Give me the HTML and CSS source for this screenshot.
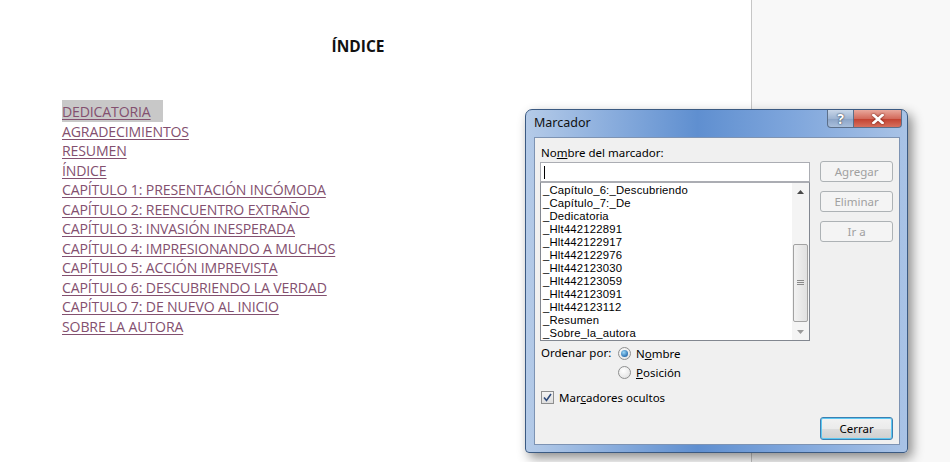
FILE: index.html
```html
<!DOCTYPE html>
<html lang="es">
<head>
    <meta charset="UTF-8">
    <title>Índice - Marcador</title>
    <link rel="stylesheet" href="styles.css">
</head>
<body>
    <div class="workspace">
        <!-- Hoja del documento -->
        <div class="page">
            <h1 class="doc-title">ÍNDICE</h1>
            <ul class="toc">
                <li><a href="#" class="sel">DEDICATORIA</a></li>
                <li><a href="#">AGRADECIMIENTOS</a></li>
                <li><a href="#">RESUMEN</a></li>
                <li><a href="#">ÍNDICE</a></li>
                <li><a href="#">CAPÍTULO 1: PRESENTACIÓN INCÓMODA</a></li>
                <li><a href="#">CAPÍTULO 2: REENCUENTRO EXTRAÑO</a></li>
                <li><a href="#">CAPÍTULO 3: INVASIÓN INESPERADA</a></li>
                <li><a href="#">CAPÍTULO 4: IMPRESIONANDO A MUCHOS</a></li>
                <li><a href="#">CAPÍTULO 5: ACCIÓN IMPREVISTA</a></li>
                <li><a href="#">CAPÍTULO 6: DESCUBRIENDO LA VERDAD</a></li>
                <li><a href="#">CAPÍTULO 7: DE NUEVO AL INICIO</a></li>
                <li><a href="#">SOBRE LA AUTORA</a></li>
            </ul>
        </div>
        <div class="side"></div>
    </div>

    <!-- Ventana Marcador -->
    <div class="dialog">
        <div class="titlebar">
            <span class="title">Marcador</span>
            <div class="caption-btns">
                <span class="cap-btn help">?</span>
                <span class="cap-btn close">
                    <svg width="12" height="10" viewBox="0 0 12 10">
                        <path d="M1.5 1 L10.5 9 M10.5 1 L1.5 9" stroke="#fff" stroke-width="2.6" stroke-linecap="square"/>
                    </svg>
                </span>
            </div>
        </div>
        <div class="client">
            <div class="left-col">
                <div class="label">No<u>m</u>bre del marcador:</div>
                <div class="input"><span class="caret"></span></div>
                <div class="listbox">
                    <ul class="items">
                        <li>_Capítulo_6:_Descubriendo</li>
                        <li>_Capítulo_7:_De</li>
                        <li>_Dedicatoria</li>
                        <li>_Hlt442122891</li>
                        <li>_Hlt442122917</li>
                        <li>_Hlt442122976</li>
                        <li>_Hlt442123030</li>
                        <li>_Hlt442123059</li>
                        <li>_Hlt442123091</li>
                        <li>_Hlt442123112</li>
                        <li>_Resumen</li>
                        <li>_Sobre_la_autora</li>
                    </ul>
                    <div class="scrollbar">
                        <span class="arrow">
                            <svg width="7" height="4" viewBox="0 0 7 4"><path d="M0 4 L3.5 0 L7 4 Z" fill="#4a4a4a"/></svg>
                        </span>
                        <div class="track">
                            <div class="thumb">
                                <svg width="7" height="6" viewBox="0 0 7 6"><path d="M0 0.5 H7 M0 2.5 H7 M0 4.5 H7" stroke="#8a8a8a" stroke-width="1"/></svg>
                            </div>
                        </div>
                        <span class="arrow">
                            <svg width="7" height="4" viewBox="0 0 7 4"><path d="M0 0 L3.5 4 L7 0 Z" fill="#9a9a9a"/></svg>
                        </span>
                    </div>
                </div>
                <div class="sort">
                    <span class="sort-label">Ordenar por:</span>
                    <div class="radios">
                        <label class="radio"><span class="dot on"></span><span>N<u>o</u>mbre</span></label>
                        <label class="radio"><span class="dot"></span><span><u>P</u>osición</span></label>
                    </div>
                </div>
                <label class="check">
                    <span class="box">
                        <svg width="9" height="9" viewBox="0 0 9 9"><path d="M1 4.5 L3.5 7.5 L8 1" fill="none" stroke="#2e4a7a" stroke-width="1.6"/></svg>
                    </span>
                    <span>Mar<u>c</u>adores ocultos</span>
                </label>
            </div>
            <div class="right-col">
                <button class="btn" disabled>Agregar</button>
                <button class="btn" disabled>Eliminar</button>
                <button class="btn" disabled>Ir a</button>
                <button class="btn default">Cerrar</button>
            </div>
        </div>
    </div>
</body>
</html>
```

FILE: styles.css
```css
body {
    margin: 0;
    width: 950px;
    height: 462px;
    overflow: hidden;
    font-family: "Open Sans", "Noto Sans", sans-serif;
    position: relative;
}
.workspace {
    display: flex;
    height: 462px;
}
.page {
    width: 752px;
    background: #fff;
    border-right: 1px solid #c6c6c6;
    padding: 36px 0 0 62px;
    box-sizing: border-box;
}
.side {
    flex: 1;
    background: #f8f8f8;
}
.doc-title {
    width: 592px;
    margin: 0;
    text-align: center;
    font-size: 15.5px;
    font-weight: 700;
    color: #111;
    line-height: 20px;
}
.toc {
    list-style: none;
    margin: 46px 0 0;
    padding: 0;
}
.toc li {
    height: 19.5px;
    line-height: 19px;
}
.toc a {
    font-size: 14.1px;
    color: #83506f;
    text-decoration: underline;
    text-underline-offset: 2px;
    letter-spacing: -0.15px;
}
.toc a.sel {
    background: #c8c8c8;
    padding: 2px 12px 1px 0;
}

/* ---- ventana Marcador ---- */
.dialog {
    position: absolute;
    left: 525px;
    top: 109px;
    width: 383px;
    height: 344px;
    box-sizing: border-box;
    padding: 0 7px 7px 8px;
    border: 1px solid #3b5a82;
    border-radius: 7px 7px 4px 4px;
    background: linear-gradient(90deg, #b5cbe8 0%, #8eb0de 20%, #5f8fd0 45%, #7fa6dc 70%, #a9c3e6 100%);
    box-shadow: 4px 5px 12px rgba(0, 0, 0, 0.45);
    font-family: "Noto Sans", "Open Sans", sans-serif;
    font-size: 11.5px;
    color: #000;
    display: flex;
    flex-direction: column;
}
.titlebar {
    height: 27px;
    display: flex;
    align-items: flex-start;
    justify-content: space-between;
}
.title {
    padding-top: 4px;
    font-size: 12.5px;
    color: #111;
}
.caption-btns {
    display: flex;
    margin-right: -2px;
}
.cap-btn {
    height: 18px;
    display: flex;
    align-items: center;
    justify-content: center;
    border: 1px solid #5b6f8a;
    border-top: none;
    box-sizing: border-box;
}
.help {
    width: 27px;
    border-radius: 0 0 0 4px;
    background: linear-gradient(#c8d6e8, #9fb5d2 50%, #8aa3c6 51%, #a9bfdc);
    color: #fff;
    font-weight: 700;
    font-size: 14px;
    text-shadow: 0 0 1px #2b3a50, 0 0 2px #3b4a60;
}
.close {
    width: 48px;
    border-left: none;
    border-radius: 0 0 4px 0;
    background: linear-gradient(#e9a89c, #d36b5c 50%, #c2402f 51%, #d7705e);
}
.close svg {
    filter: drop-shadow(0 0 1px #6b1a10);
}
.client {
    flex: 1;
    background: #f0f0f0;
    border: 1px solid #7d93b3;
    display: flex;
    padding: 0 6px 4px 5px;
    gap: 10px;
}
.left-col {
    width: 271px;
    display: flex;
    flex-direction: column;
}
.label {
    margin-top: 7px;
    height: 16px;
    line-height: 16px;
    padding-left: 1px;
}
.input {
    height: 20px;
    margin-top: 1px;
    background: #fff;
    border: 1px solid #abadb3;
    box-sizing: border-box;
    padding: 3px 0 0 3px;
}
.caret {
    display: block;
    width: 1px;
    height: 13px;
    background: #000;
}
.listbox {
    height: 159px;
    background: #fff;
    border: 1px solid #828790;
    border-top-color: #abadb3;
    box-sizing: border-box;
    display: flex;
}
.items {
    flex: 1;
    list-style: none;
    margin: 0;
    padding: 1px 0 0 2px;
    font-family: "Liberation Sans", Arial, sans-serif;
    font-size: 11.3px;
    letter-spacing: 0.2px;
}
.items li {
    height: 13px;
    line-height: 13px;
}
.scrollbar {
    width: 17px;
    display: flex;
    flex-direction: column;
    background: #f4f4f4;
}
.arrow {
    height: 17px;
    display: flex;
    align-items: center;
    justify-content: center;
}
.track {
    flex: 1;
    padding-top: 44px;
}
.thumb {
    height: 76px;
    margin: 0 1px;
    border: 1px solid #a2a2a2;
    border-radius: 2px;
    background: linear-gradient(90deg, #f2f2f2, #e0e0e0);
    display: flex;
    align-items: center;
    justify-content: center;
}
.sort {
    display: flex;
    margin-top: 3px;
}
.sort-label {
    width: 77px;
    line-height: 18px;
    padding-left: 1px;
}
.radios {
    display: flex;
    flex-direction: column;
    gap: 1px;
}
.radio, .check {
    display: flex;
    align-items: center;
    gap: 5px;
    height: 18px;
}
.dot {
    width: 13px;
    height: 13px;
    border-radius: 50%;
    border: 1px solid #8e8f8f;
    background: radial-gradient(circle at 40% 35%, #fff, #dcdcdc);
    box-sizing: border-box;
    position: relative;
}
.dot.on::after {
    content: "";
    position: absolute;
    left: 2px;
    top: 2px;
    width: 7px;
    height: 7px;
    border-radius: 50%;
    background: radial-gradient(circle at 40% 35%, #9ad8f8, #1f64a8 80%);
}
.check {
    margin-top: 7px;
    padding-left: 1px;
}
.box {
    width: 13px;
    height: 13px;
    border: 1px solid #8e8f8f;
    background: linear-gradient(#f4f4f4, #dedede);
    box-sizing: border-box;
    display: flex;
    align-items: center;
    justify-content: center;
}
.right-col {
    width: 73px;
    display: flex;
    flex-direction: column;
    gap: 9px;
    padding-top: 23px;
}
.btn {
    height: 21px;
    font-family: inherit;
    font-size: 11.5px;
    border: 1px solid #adb2b5;
    border-radius: 3px;
    background: #f4f4f4;
    color: #a0a0a0;
    padding: 0;
}
.btn.default {
    margin-top: auto;
    height: 23px;
    color: #000;
    border: 1px solid #3c7fb1;
    box-shadow: inset 0 0 0 1px #5dc8f2;
    background: linear-gradient(#f2f2f2 0%, #ebebeb 50%, #dddddd 51%, #cfcfcf 100%);
}
```
